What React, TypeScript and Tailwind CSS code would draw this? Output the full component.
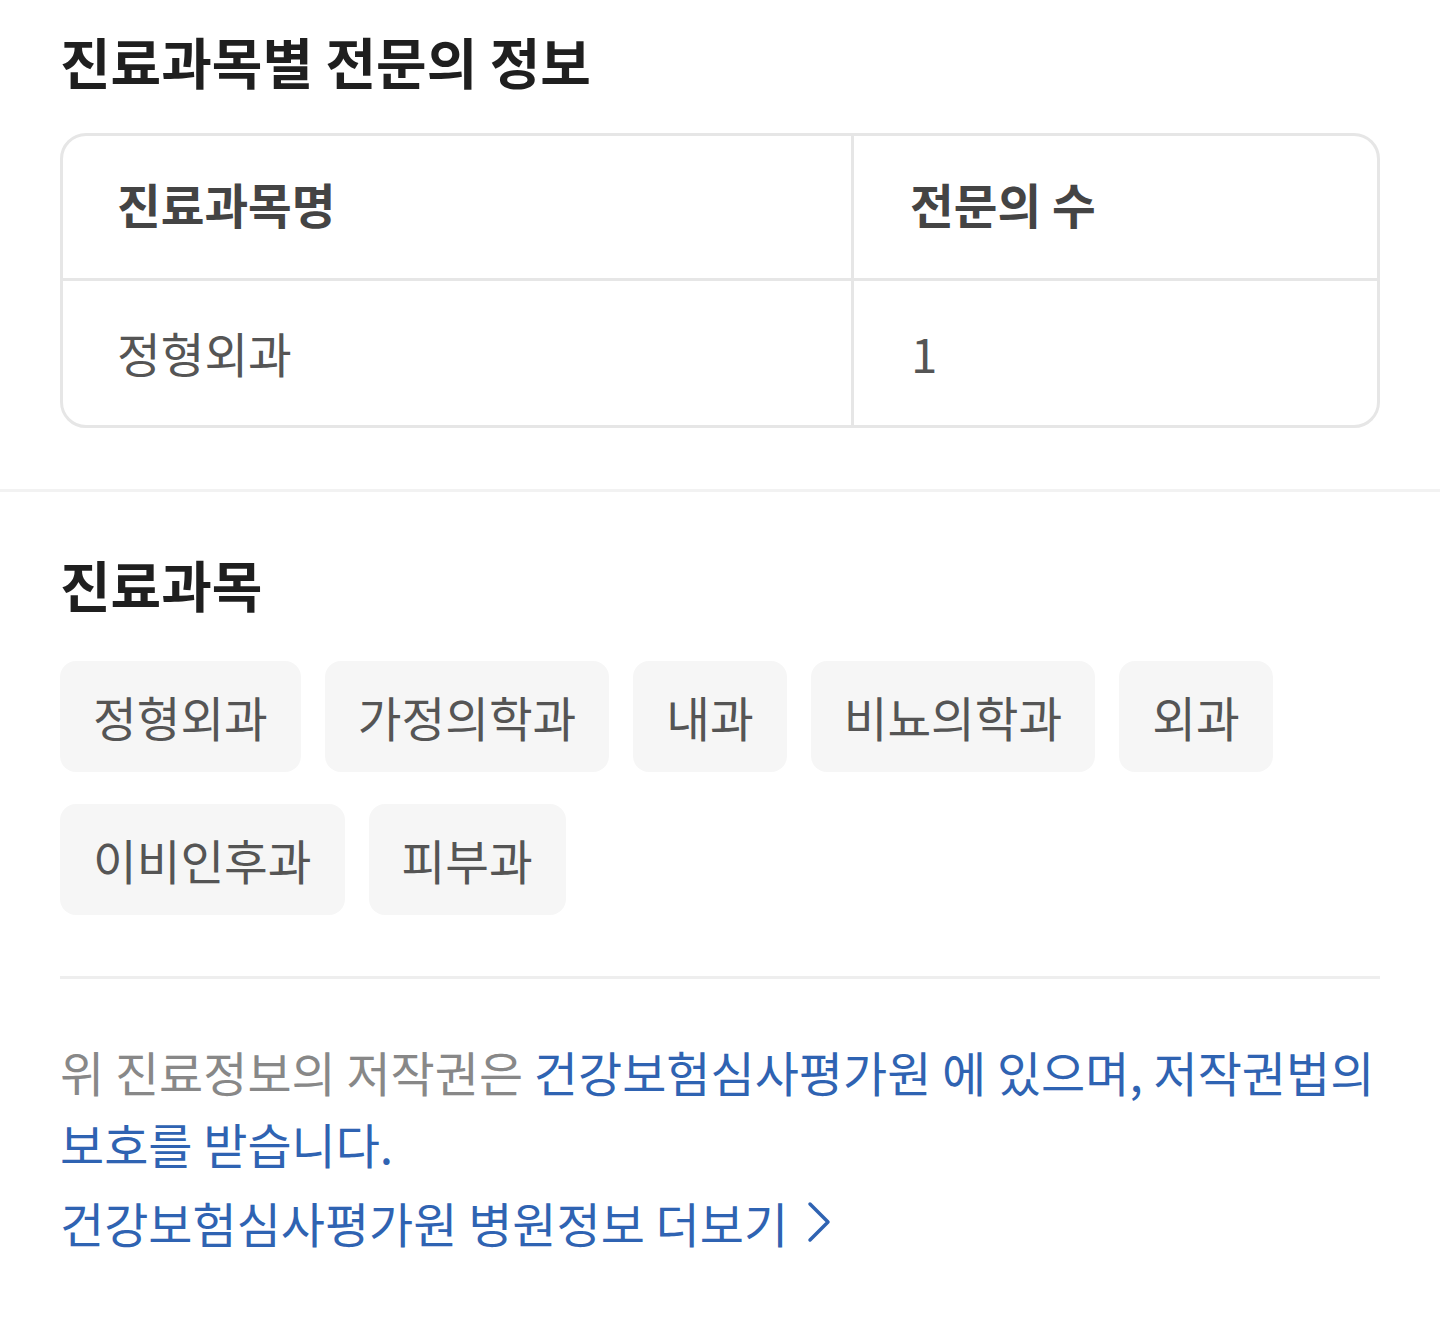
import React from "react";

const font = { fontFamily: '"Noto Sans CJK KR", "Noto Sans", sans-serif' };

const chipsRow1 = ["정형외과", "가정의학과", "내과", "비뇨의학과", "외과"];
const chipsRow2 = ["이비인후과", "피부과"];

function Chip({ label }: { label: string }) {
  return (
    <div className="h-[111px] px-[33px] flex items-center rounded-[16px] bg-[#f6f6f6] text-[47.5px] text-[#555555] leading-none">
      {label}
    </div>
  );
}

export default function App() {
  return (
    <div className="w-[1440px] h-[1318px] bg-white overflow-hidden" style={font}>
      <div className="px-[60px] pt-[26px]">
        <h1 className="text-[55px] font-bold text-[#1f1f1f] leading-[68px]">
          진료과목별 전문의 정보
        </h1>
        <div className="mt-[39px] border-[3px] border-[#e6e6e6] rounded-[26px] overflow-hidden">
          <div className="grid grid-cols-[791px_1fr] h-[145px] border-b-[3px] border-[#e6e6e6]">
            <div className="border-r-[3px] border-[#e6e6e6] flex items-center pl-[54px] pb-[6px] text-[47.5px] font-bold text-[#444444]">
              진료과목명
            </div>
            <div className="flex items-center pl-[56px] pb-[6px] text-[47.5px] font-bold text-[#444444]">
              전문의 수
            </div>
          </div>
          <div className="grid grid-cols-[791px_1fr] h-[144px]">
            <div className="border-r-[3px] border-[#e6e6e6] flex items-center pl-[54px] text-[47.5px] text-[#555555]">
              정형외과
            </div>
            <div className="flex items-center pl-[57px] text-[47.5px] text-[#555555]">1</div>
          </div>
        </div>
      </div>

      <div className="mt-[61px] h-[3px] bg-[#f2f2f2]" />

      <div className="px-[60px]">
        <h2 className="mt-[57px] text-[55px] font-bold text-[#1f1f1f] leading-[68px]">
          진료과목
        </h2>
        <div className="mt-[44px] flex flex-col gap-[32px]">
          <div className="flex gap-[24px]">
            {chipsRow1.map((c) => (
              <Chip key={c} label={c} />
            ))}
          </div>
          <div className="flex gap-[24px]">
            {chipsRow2.map((c) => (
              <Chip key={c} label={c} />
            ))}
          </div>
        </div>

        <div className="mt-[61px] h-[3px] bg-[#eeeeee]" />

        <div className="mt-[56px] text-[48px] leading-[72px]">
          <p className="whitespace-nowrap">
            <span className="text-[#888888]">위 진료정보의 저작권은 </span>
            <span className="text-[#2f63b2]">건강보험심사평가원 에 있으며, 저작권법의</span>
          </p>
          <p className="text-[#2f63b2]">보호를 받습니다.</p>
          <p className="mt-[7px] text-[#2f63b2] flex items-center gap-[18px]">
            <span>건강보험심사평가원 병원정보 더보기</span>
            <svg width="26" height="42" viewBox="0 0 26 42" fill="none">
              <path d="M4 3 L22 21 L4 39" stroke="#2f63b2" strokeWidth="3.5" strokeLinecap="round" strokeLinejoin="round" />
            </svg>
          </p>
        </div>
      </div>
    </div>
  );
}
